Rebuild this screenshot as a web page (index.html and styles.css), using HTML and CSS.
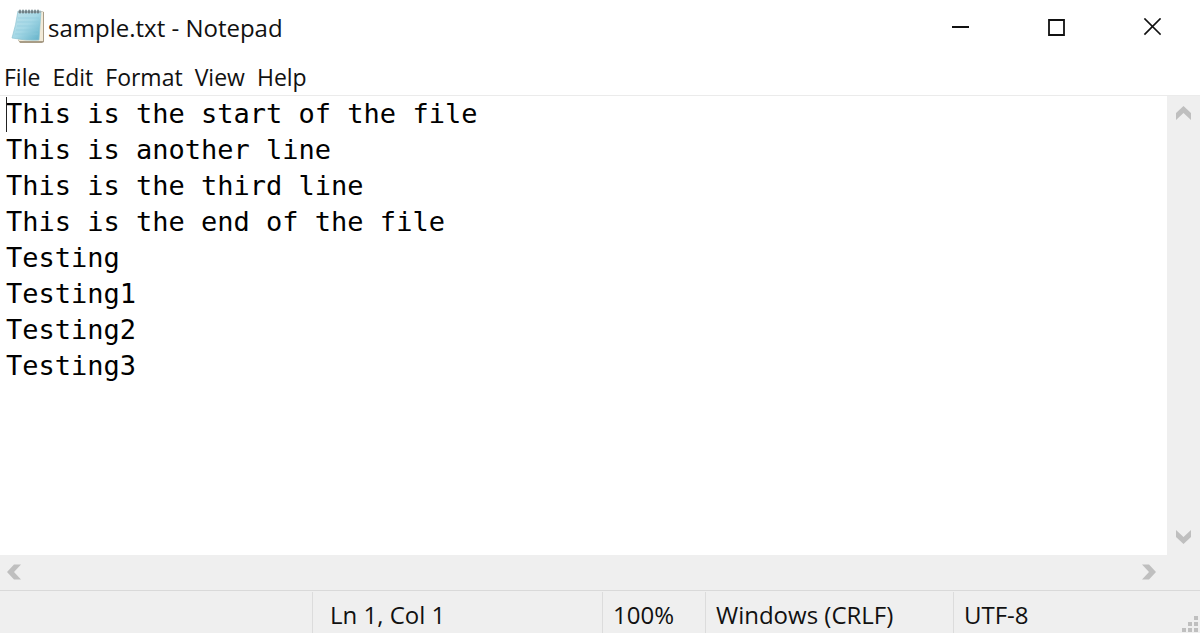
FILE: index.html
```html
<!DOCTYPE html>
<html lang="en">
<head>
<meta charset="utf-8">
<title>sample.txt - Notepad</title>
<link rel="stylesheet" href="styles.css">
</head>
<body>
<div class="window">
  <header class="titlebar">
    <svg class="app-icon" viewBox="0 0 36 36" aria-hidden="true">
      <defs>
        <linearGradient id="sheet" x1="0" y1="0" x2="1" y2="1">
          <stop offset="0" stop-color="#c3e3eb"/>
          <stop offset="0.5" stop-color="#a5d8e6"/>
          <stop offset="1" stop-color="#60b0c8"/>
        </linearGradient>
      </defs>
      <path d="M31 3L34 4V34L32 35H10L8 32Z" fill="#a89c86"/>
      <path d="M30 3L33 4V33H9L8 31Z" fill="#f2ead8"/>
      <path d="M8 3H31L29 32Q16 33 2 30Q6 17 8 3Z" fill="url(#sheet)" stroke="#8fc4d2" stroke-width="0.7"/>
      <path d="M8 10H29M7 14H29M7 18H28M6 22H28M5 26H28" stroke="#8fcbdb" stroke-width="0.6"/>
      <path d="M8 3H31V5H8Z" fill="#a2b3b8"/>
      <path d="M10 2V5M13 2V5M16 2V5M19 2V5M22 2V5M25 2V5M28 2V5" stroke="#4f6066" stroke-width="1.2" stroke-linecap="round"/>
    </svg>
    <h1 class="title">sample.txt - Notepad</h1>
    <div class="controls">
      <button class="control" type="button" aria-label="Minimize">
        <svg viewBox="0 0 18 18"><path d="M1 9H18" stroke-width="2"/></svg>
      </button>
      <button class="control" type="button" aria-label="Maximize">
        <svg viewBox="0 0 18 18"><path d="M2 2H17V17H2Z" stroke-width="1.8"/></svg>
      </button>
      <button class="control" type="button" aria-label="Close">
        <svg viewBox="0 0 18 18"><path d="M2 1L17 16M17 1L2 16" stroke-width="1.7" stroke-linecap="square"/></svg>
      </button>
    </div>
  </header>
  <nav class="menubar" aria-label="Menu">
    <button class="menu" type="button">File</button>
    <button class="menu" type="button">Edit</button>
    <button class="menu" type="button">Format</button>
    <button class="menu" type="button">View</button>
    <button class="menu" type="button">Help</button>
  </nav>
  <main class="editor">
    <div class="document">
      <textarea class="text" aria-label="Document text" wrap="off" spellcheck="false">This is the start of the file
This is another line
This is the third line
This is the end of the file
Testing
Testing1
Testing2
Testing3</textarea>
      <span class="caret"></span>
    </div>
    <div class="scroll vertical">
      <button class="arrow" type="button" aria-label="Scroll up"><svg viewBox="0 0 16 16"><path d="M7.5 1L15 8V15L7.5 8L0 15V8Z"/></svg></button>
      <button class="arrow" type="button" aria-label="Scroll down"><svg viewBox="0 0 16 16"><path d="M7.5 14L15 7V0L7.5 7L0 0V7Z"/></svg></button>
    </div>
    <div class="scroll horizontal">
      <button class="arrow" type="button" aria-label="Scroll left"><svg viewBox="0 0 16 16"><path d="M1 8L8 0.5H15L8 8L15 15.5H8Z"/></svg></button>
      <button class="arrow" type="button" aria-label="Scroll right"><svg viewBox="0 0 16 16"><path d="M15 8L8 0.5H1L8 8L1 15.5H8Z"/></svg></button>
    </div>
  </main>
  <footer class="statusbar">
    <span class="cell filler"></span>
    <span class="cell position">Ln 1, Col 1</span>
    <span class="cell zoom">100%</span>
    <span class="cell ending">Windows (CRLF)</span>
    <span class="cell encoding">UTF-8</span>
    <svg class="grip" viewBox="0 0 16 16" aria-hidden="true"><path d="M12 0h4v4h-4zM6 6h4v4h-4zM12 6h4v4h-4zM0 12h4v4h-4zM6 12h4v4h-4zM12 12h4v4h-4z"/></svg>
  </footer>
</div>
</body>
</html>
```
FILE: styles.css
```css
* {
  box-sizing: border-box;
}

body {
  margin: 0;
  background: #fff;
  color: #111;
  font: 24px/32px "Open Sans", "Noto Sans", sans-serif;
}

button {
  padding: 0;
  border: 0;
  background: none;
  color: inherit;
  font: inherit;
}

.window {
  display: flex;
  flex-direction: column;
  height: 100vh;
  overflow: hidden;
}

.titlebar {
  display: flex;
  align-items: center;
  flex: none;
  height: 56px;
  padding-left: 10px;
}

.app-icon {
  width: 36px;
  height: 36px;
  margin-right: 2px;
  margin-bottom: 4px;
}

.title {
  flex: 1;
  margin: 0;
  font-size: inherit;
  font-weight: 400;
}

.controls {
  display: flex;
  align-self: stretch;
}

.control {
  display: flex;
  align-items: center;
  justify-content: center;
  width: 96px;
  padding-bottom: 2px;
}

.control svg {
  width: 18px;
  height: 18px;
  fill: none;
  stroke: #111;
}

.menubar {
  display: flex;
  align-items: center;
  flex: none;
  gap: 12px;
  height: 40px;
  padding: 2px 4px 0;
  border-bottom: 1px solid #ebebeb;
  font-size: 23px;
}

.editor {
  display: grid;
  flex: 1;
  grid-template: minmax(0, 1fr) 35px / minmax(0, 1fr) 33px;
  min-height: 0;
}

.document {
  position: relative;
}

.text {
  display: block;
  width: 100%;
  height: 100%;
  padding: 0 6px;
  border: 0;
  outline: 0;
  overflow: hidden;
  resize: none;
  background: #fff;
  color: #000;
  font: 27px/36px "DejaVu Sans Mono", monospace;
}

.caret {
  position: absolute;
  top: 1px;
  left: 6px;
  width: 1px;
  height: 35px;
  background: #222;
}

.scroll {
  display: flex;
  justify-content: space-between;
  background: #efefef;
}

.vertical {
  flex-direction: column;
}

.horizontal {
  grid-column: 1 / -1;
  padding-right: 33px;
}

.arrow {
  display: flex;
  align-items: center;
  justify-content: center;
  width: 33px;
  height: 34px;
}

.horizontal .arrow {
  width: 28px;
}

.arrow svg {
  width: 16px;
  height: 16px;
  fill: #bfbfbf;
}

.horizontal .arrow:last-child {
  width: 36px;
}

.statusbar {
  position: relative;
  display: flex;
  flex: none;
  height: 43px;
  padding-top: 1px;
  border-top: 1px solid #d9d9d9;
  background: #efefef;
}

.cell {
  padding: 7px 10px 0;
  border-left: 1px solid #dcdcdc;
  white-space: nowrap;
}

.filler {
  flex: 1;
  border-left: 0;
}

.position {
  width: 290px;
  padding-left: 17px;
}

.zoom {
  width: 103px;
}

.ending {
  width: 248px;
}

.encoding {
  width: 247px;
}

.grip {
  position: absolute;
  right: 2px;
  bottom: 1px;
  width: 16px;
  height: 16px;
  fill: #bfbfbf;
}
```
